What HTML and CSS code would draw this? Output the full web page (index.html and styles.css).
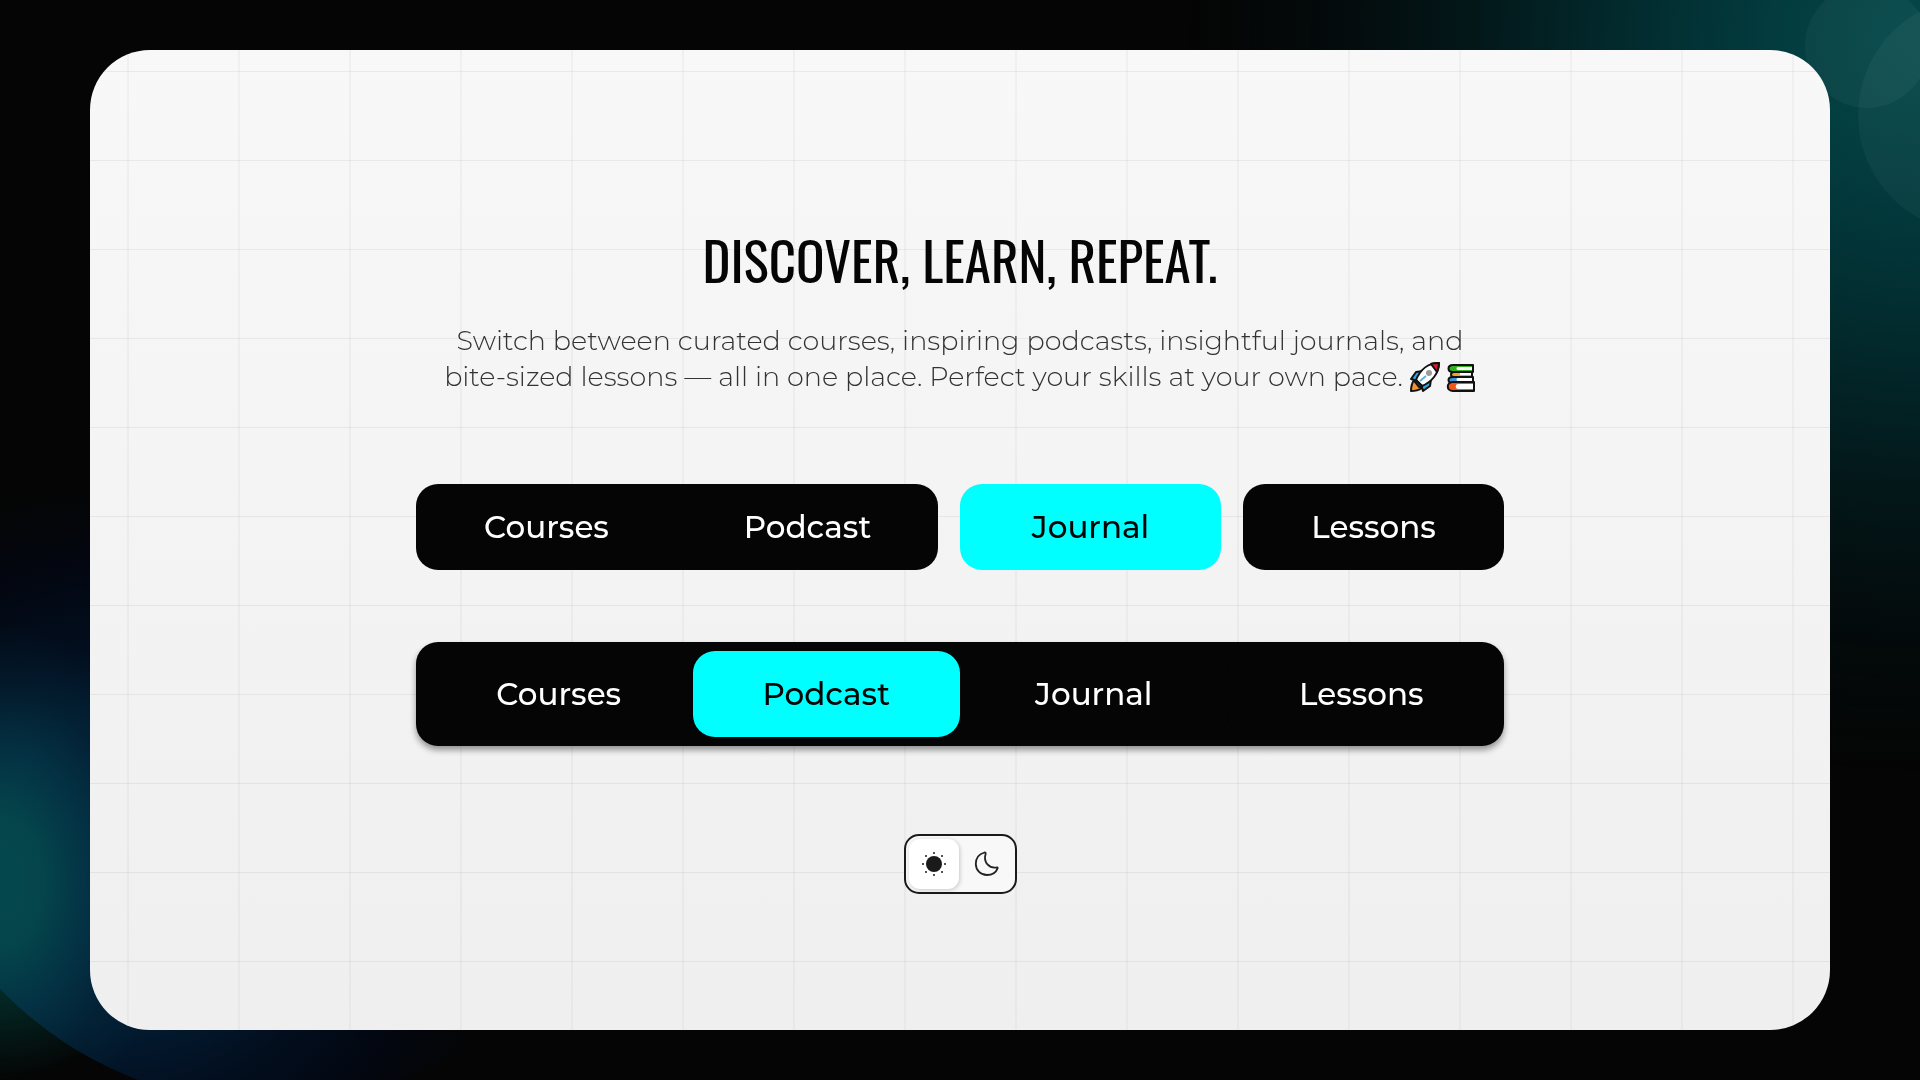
FILE: index.html
```
<!DOCTYPE html>
<html lang="en">
<head>
<meta charset="utf-8">
<meta name="viewport" content="width=device-width, initial-scale=1">
<title>Discover, Learn, Repeat.</title>
<link rel="stylesheet" href="styles.css">
</head>
<body>
<div class="backdrop" aria-hidden="true">
  <span class="orb orb-large"></span>
  <span class="orb orb-small"></span>
  <span class="orb orb-glow"></span>
</div>
<main class="panel">
  <header class="intro">
    <h1 class="title">Discover, Learn, Repeat.</h1>
    <p class="lead">Switch between curated courses, inspiring podcasts, insightful journals, and<br>bite-sized lessons — all in one place. Perfect your skills at your own pace.
      <svg class="emoji" viewBox="0 0 30 30" role="img" aria-label="rocket">
        <g stroke="#111" stroke-width="2" stroke-linejoin="round">
          <path d="M13 9 6 10 1 17l7 2ZM21 17l-1 7-7 5-2-7Z" fill="#2fa8e0"/>
          <path d="M4 18c-2 3-3 7-3 11 4 0 8-1 11-3Z" fill="#f1922d"/>
          <path d="M6 18C10 8 18 1 29 1c0 10-7 19-17 23Z" fill="#fff"/>
          <path d="M21 2c2-1 5-1 8-1 0 3-1 6-2 9Z" fill="#e2152e"/>
          <path d="m6 18 6 6-3 1-4-5Z" fill="#3f3f3f"/>
        </g>
        <path d="m10 19 6-5" stroke="#61b2e4" stroke-width="2"/>
        <circle cx="19" cy="11" r="3" fill="#9b9b9a"/>
      </svg><svg class="emoji" viewBox="0 0 30 30" role="img" aria-label="books">
        <g stroke="#111" stroke-width="2" stroke-linejoin="round">
          <path d="M27 3H7C1 3 1 10 7 10h20Z" fill="#2fb31f"/>
          <path d="M26 10H8c-4 0-4 5 0 5h18Z" fill="#f1a51c"/>
          <path d="M27 15H7c-6 0-6 6 0 6h20Z" fill="#3f94dc"/>
          <path d="M28 20H7c-7 0-7 9 0 9h21Z" fill="#f0561a"/>
        </g>
        <path d="M12 5h14v3H12c-2 0-2-3 0-3ZM14 11h11v2H14ZM12 16h14v3H12c-2 0-2-3 0-3ZM12 22h15v5H12c-3 0-3-5 0-5Z" fill="#fff"/>
      </svg></p>
  </header>

  <nav class="tabs tabs-split" aria-label="Split tabs">
    <button class="tab tab-first" type="button">Courses</button>
    <button class="tab tab-last" type="button">Podcast</button>
    <button class="tab tab-alone tab-active" type="button" aria-current="true">Journal</button>
    <button class="tab tab-alone" type="button">Lessons</button>
  </nav>

  <nav class="tabs tabs-bar" aria-label="Tab bar">
    <button class="tab" type="button">Courses</button>
    <button class="tab tab-active" type="button" aria-current="true">Podcast</button>
    <button class="tab" type="button">Journal</button>
    <button class="tab" type="button">Lessons</button>
  </nav>

  <div class="theme" role="group" aria-label="Theme">
    <button class="theme-option theme-on" type="button" aria-label="Light" aria-pressed="true">
      <svg class="theme-icon" viewBox="0 0 26 26">
        <circle cx="13" cy="13" r="8" fill="#1a1a1a"/>
        <g fill="#1a1a1a">
          <circle cx="13" cy="2" r="1"/><circle cx="13" cy="24" r="1"/><circle cx="2" cy="13" r="1"/><circle cx="24" cy="13" r="1"/>
          <circle cx="5" cy="5" r="1"/><circle cx="21" cy="5" r="1"/><circle cx="5" cy="21" r="1"/><circle cx="21" cy="21" r="1"/>
        </g>
      </svg>
    </button>
    <button class="theme-option" type="button" aria-label="Dark" aria-pressed="false">
      <svg class="theme-icon" viewBox="0 0 26 26">
        <path d="M10.500 1.500C5 3 1.800 7.500 1.800 13c0 6.300 5 11 11.200 11 4.800 0 9-2.500 10.600-6.600.3-.8-.2-1.200-1-1C15.500 17.500 9 11.500 11.600 3c.3-.9-.2-1.700-1.100-1.500Z" fill="none" stroke="#222" stroke-width="1.800" stroke-linejoin="round"/>
      </svg>
    </button>
  </div>
</main>
</body>
</html>
```
FILE: styles.css
```
* {
  box-sizing: border-box;
}

body {
  margin: 0;
  min-height: 100vh;
  padding: 50px 90px;
  display: flex;
  background: #050505;
  font-family: Montserrat, Inter, "Noto Sans", sans-serif;
  color: #050505;
}

.backdrop {
  position: fixed;
  inset: 0;
  z-index: -1;
  overflow: hidden;
  background:
    radial-gradient(circle at 0 910px, #04403a 0, #032b28 80px, rgba(5, 5, 5, 0) 170px),
    radial-gradient(circle at 100% 40px, #04484a 0, #033b3e 150px, #022a2d 300px, #03181a 440px, #040b0c 580px, rgba(5, 5, 5, 0) 730px);
}

.orb {
  position: absolute;
  border-radius: 50%;
  background: rgba(255, 255, 255, 0.04);
}

.orb-large {
  top: -3px;
  right: -174px;
  width: 236px;
  height: 236px;
}

.orb-small {
  top: -16px;
  right: -9px;
  width: 124px;
  height: 124px;
}

.orb-glow {
  left: -104px;
  top: 356px;
  width: 748px;
  height: 748px;
  background:
    radial-gradient(170px 260px at 104px 526px, #04494f 0, #04454b 25%, rgba(4, 60, 76, 0.7) 50%, rgba(4, 50, 66, 0.3) 75%, rgba(4, 40, 60, 0) 100%),
    radial-gradient(circle at 220px 520px, #042038 0, #031a30 150px, #020e1e 230px, #03060f 320px, #050505 390px);
}

.panel {
  flex: 1;
  display: flex;
  flex-direction: column;
  align-items: center;
  justify-content: center;
  padding: 72px 40px 40px;
  border-radius: 60px;
  background:
    linear-gradient(rgba(0, 0, 0, 0.06) 1px, transparent 1px) 0 21px / 111px 89px,
    linear-gradient(90deg, rgba(0, 0, 0, 0.03) 2px, transparent 2px) 37px 0 / 111px 89px,
    linear-gradient(#f8f8f8, #efefef);
}

.intro {
  text-align: center;
}

.title {
  margin: 0;
  font: 400 53px/80px Oswald, "Roboto Condensed", "Liberation Sans Narrow", sans-serif;
  text-transform: uppercase;
}

.lead {
  margin: 24px 0 0;
  font-size: 27px;
  font-weight: 300;
  line-height: 36px;
  color: #333;
}

.emoji {
  width: 30px;
  height: 30px;
  vertical-align: -6px;
}

.emoji + .emoji {
  margin-left: 6px;
}

.tabs {
  width: 100%;
  max-width: 1088px;
  display: flex;
}

.tabs-split {
  margin-top: 89px;
}

.tabs-bar {
  margin-top: 72px;
  padding: 9px;
  border-radius: 22px;
  background: #050505;
  box-shadow: 0 4px 6px rgba(0, 0, 0, 0.4);
}

.tab {
  flex: 1;
  height: 86px;
  padding: 0;
  border: 0;
  border-radius: 22px;
  background: #050505;
  color: #fff;
  font-family: inherit;
  font-size: 31px;
  font-weight: 500;
}

.tab-first {
  border-radius: 22px 0 0 22px;
}

.tab-last {
  border-radius: 0 22px 22px 0;
}

.tab-alone {
  margin-left: 22px;
}

.tab-active {
  background: #0ff;
  color: #050505;
}

.theme {
  margin-top: 88px;
  display: flex;
  gap: 3px;
  padding: 3px;
  border: 2px solid #1a1a1a;
  border-radius: 15px;
  background: #f8f8f8;
}

.theme-option {
  display: grid;
  place-items: center;
  width: 50px;
  height: 50px;
  padding: 0;
  border: 0;
  border-radius: 11px;
  background: none;
}

.theme-on {
  background: #fff;
  box-shadow: 1px 1px 4px rgba(0, 0, 0, 0.2);
}

.theme-icon {
  width: 26px;
  height: 26px;
}
```
